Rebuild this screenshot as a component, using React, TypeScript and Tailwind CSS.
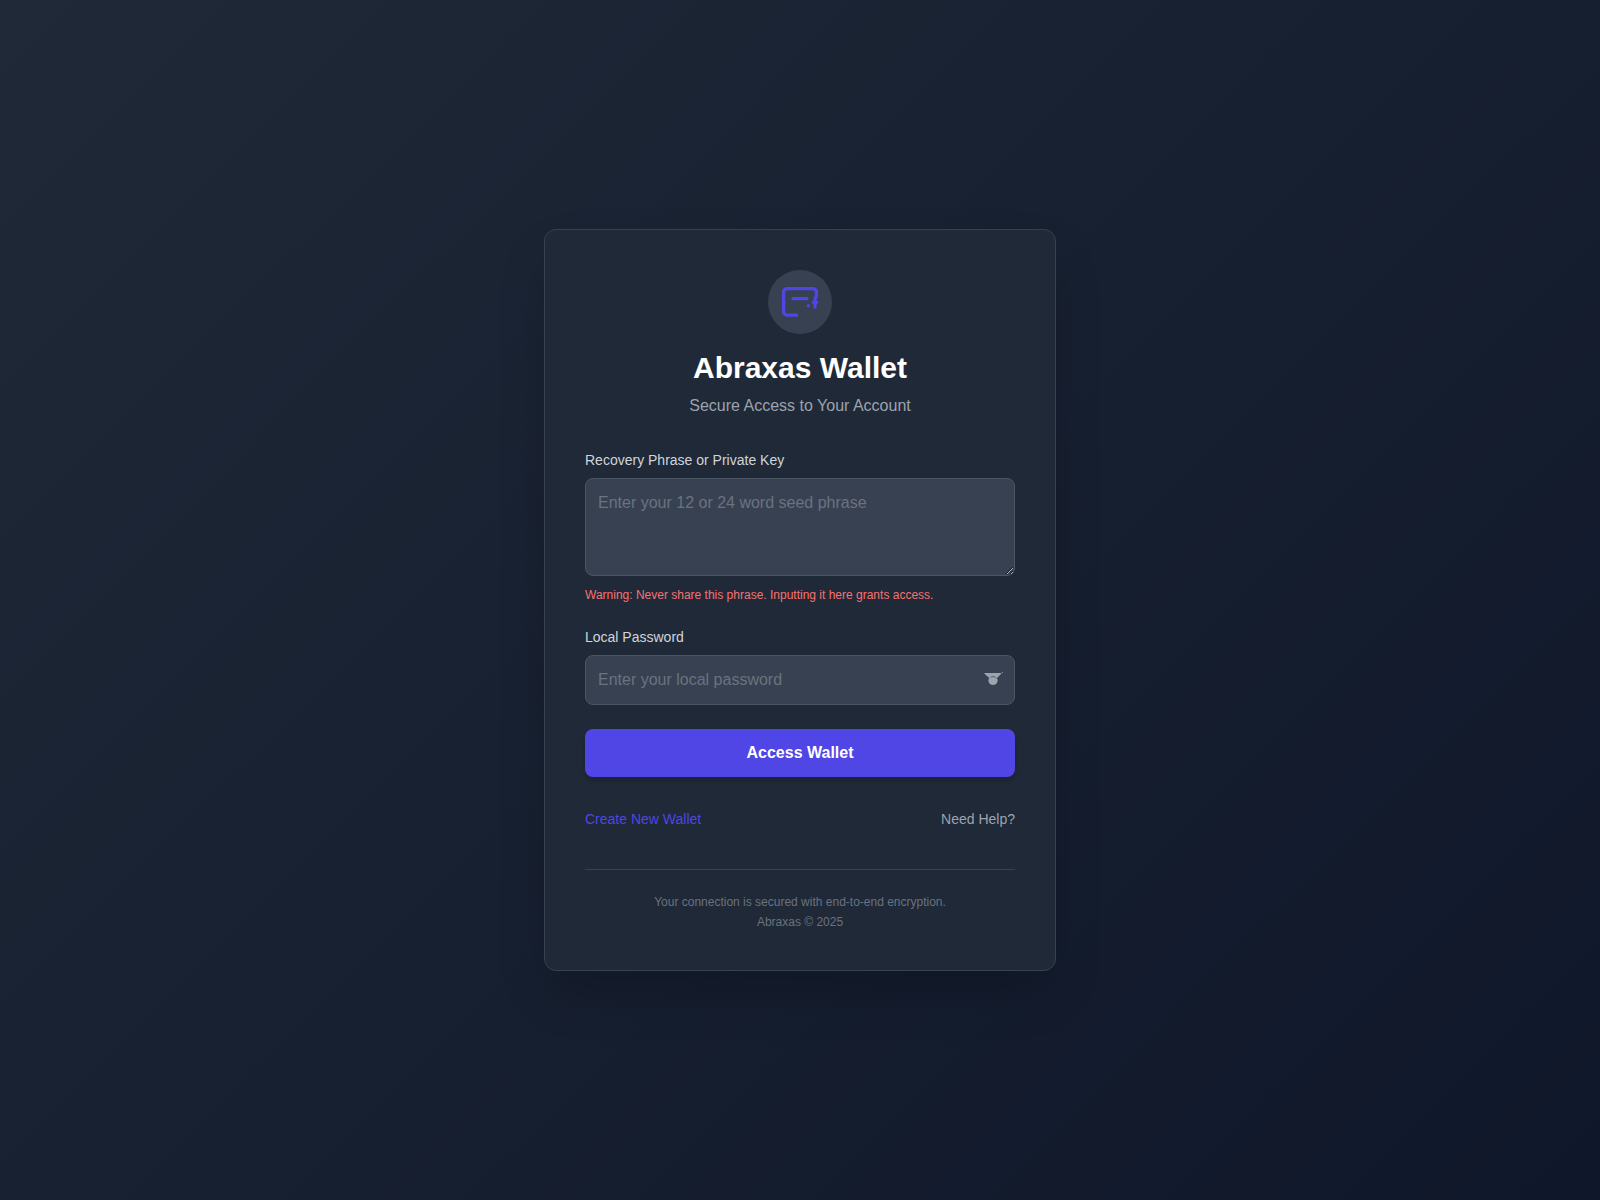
import React, { useState } from 'react';

interface FieldProps {
  id: string;
  label: string;
  children: React.ReactNode;
}

const inputClasses =
  'w-full rounded-lg border border-[#4b5563] bg-[#374151] p-3 text-base text-white placeholder:text-[#6b7280] focus:border-[#4f46e5] focus:outline-none';

const WalletIcon = () => (
  <svg
    className="size-10 text-[#4f46e5]"
    viewBox="0 0 24 24"
    fill="none"
    stroke="currentColor"
    strokeWidth={2}
    strokeLinecap="round"
    strokeLinejoin="round"
    aria-hidden="true"
  >
    <path d="M10 19.9H4.2a2 2 0 0 1-2-2V6a2 2 0 0 1 2-2h15.6a2 2 0 0 1 2 2v2.6L21 10v5" />
    <path d="M7.8 10h8.4" />
    <path d="M20 12.2h2" />
    <path d="M17 14.2h.01" />
  </svg>
);

const EyeIcon = () => (
  <svg className="size-5" viewBox="0 0 20 20" fill="currentColor" aria-hidden="true">
    <path d="M1 3h17.8L14.4 7.8H6L2.6 4.8z" />
    <circle cx="10" cy="10.4" r="4.6" />
    <circle cx="19.3" cy="2.6" r=".5" />
    <path d="M7.4 7.4C8.2 6.4 11.8 6.4 12.8 7.6" fill="none" stroke="#374151" strokeWidth={0.7} />
  </svg>
);

const Field: React.FC<FieldProps> = ({ id, label, children }) => (
  <div>
    <label htmlFor={id} className="mb-2 block text-sm text-[#d1d5db]">
      {label}
    </label>
    {children}
  </div>
);

const App: React.FC = () => {
  const [phrase, setPhrase] = useState('');
  const [password, setPassword] = useState('');
  const [showPassword, setShowPassword] = useState(false);

  return (
    <div className="flex min-h-screen items-center justify-center bg-linear-135/srgb from-[#1f2937] to-[#0f172a] p-4 font-[Arial,'Liberation_Sans',sans-serif]">
      <main className="w-full max-w-lg rounded-xl border border-[#374151] bg-[#1f2937] p-10 shadow-2xl">
        <header className="mb-8 text-center">
          <div className="mx-auto mb-4 flex size-16 items-center justify-center rounded-full bg-[#374151]">
            <WalletIcon />
          </div>
          <h1 className="text-3xl font-bold text-white">Abraxas Wallet</h1>
          <p className="mt-2 text-base text-[#9ca3af]">Secure Access to Your Account</p>
        </header>

        <form className="space-y-6" onSubmit={(e) => e.preventDefault()}>
          <Field id="phrase" label="Recovery Phrase or Private Key">
            <textarea
              id="phrase"
              rows={3}
              value={phrase}
              onChange={(e) => setPhrase(e.target.value)}
              placeholder="Enter your 12 or 24 word seed phrase"
              className={`${inputClasses} align-baseline`}
            />
            <p className="mt-1 text-xs text-[#f87171]">
              Warning: Never share this phrase. Inputting it here grants access.
            </p>
          </Field>

          <Field id="password" label="Local Password">
            <div className="relative">
              <input
                id="password"
                type={showPassword ? 'text' : 'password'}
                value={password}
                onChange={(e) => setPassword(e.target.value)}
                placeholder="Enter your local password"
                className={`${inputClasses} block pr-10`}
              />
              <button
                type="button"
                aria-label="Toggle password visibility"
                onClick={() => setShowPassword((prev) => !prev)}
                className="absolute inset-y-0 right-0 flex items-center pr-3 text-[#9ca3af]"
              >
                <EyeIcon />
              </button>
            </div>
          </Field>

          <button
            type="submit"
            className="block w-full rounded-lg bg-[#4f46e5] py-3 text-base font-bold text-white shadow-md hover:bg-[#4338ca]"
          >
            Access Wallet
          </button>
        </form>

        <nav className="mt-8 flex items-center justify-between text-sm">
          <a href="#create" className="text-[#4f46e5] hover:underline">
            Create New Wallet
          </a>
          <a href="#help" className="text-[#9ca3af] hover:underline">
            Need Help?
          </a>
        </nav>

        <footer className="mt-10 space-y-1 border-t border-[#374151] pt-6 text-center text-xs text-[#6b7280]">
          <p>Your connection is secured with end-to-end encryption.</p>
          <p>Abraxas © 2025</p>
        </footer>
      </main>
    </div>
  );
};

export default App;
